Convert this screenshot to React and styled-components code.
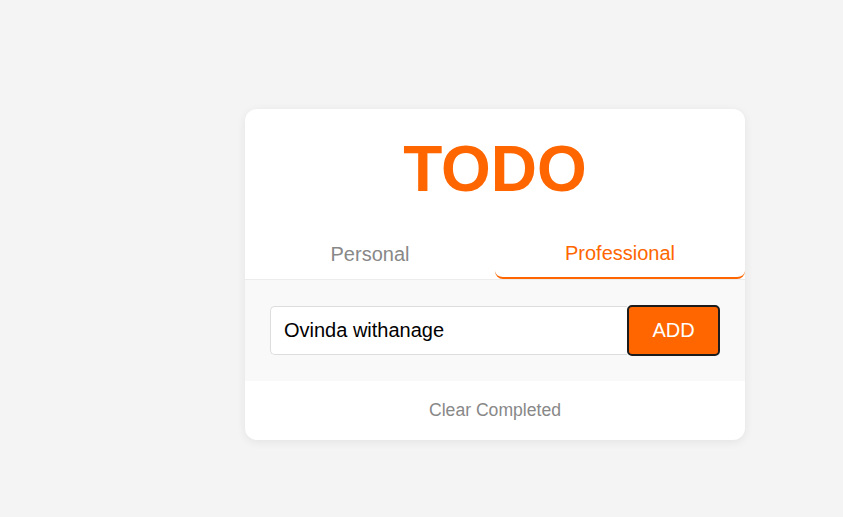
import styled, { createGlobalStyle } from "styled-components";

const GlobalStyle = createGlobalStyle`
  html, body {
    margin: 0;
    padding: 0;
    background: #f4f4f4;
    font-family: "Liberation Sans", Arial, sans-serif;
  }
`;

function App() {
  return (
    <Page>
      <GlobalStyle />
      <Card>
        <Title>TODO</Title>
        <Tabs>
          <Tab>Personal</Tab>
          <Tab active>Professional</Tab>
        </Tabs>
        <Form>
          <TaskInput defaultValue="Ovinda withanage" />
          <AddButton>ADD</AddButton>
        </Form>
        <Footer>
          <ClearButton>Clear Completed</ClearButton>
        </Footer>
      </Card>
    </Page>
  );
}

export default App;

const Page = styled.div`
  min-height: 517px;
  padding: 109px 0 0 245px;
  box-sizing: border-box;
`;

const Card = styled.div`
  width: 500px;
  background: #fff;
  border-radius: 12px;
  box-shadow: 0 2px 10px rgba(0, 0, 0, 0.07);
  overflow: hidden;
`;

const Title = styled.h1`
  margin: 0;
  padding-top: 28px;
  margin-bottom: 29px;
  text-align: center;
  font-size: 64px;
  line-height: 64px;
  font-weight: bold;
  color: #ff6600;
`;

const Tabs = styled.div`
  display: flex;
  align-items: flex-end;
`;

const Tab = styled.div`
  flex: 1;
  text-align: center;
  padding: 12px 0;
  font-size: 20px;
  line-height: 23px;
  color: ${(p) => (p.active ? "#ff6600" : "#888")};
  border-bottom: ${(p) => (p.active ? "2px solid #ff6600" : "1px solid transparent")};
  border-radius: ${(p) => (p.active ? "0 0 8px 8px" : "0")};
  cursor: pointer;
`;

const Form = styled.div`
  display: flex;
  align-items: center;
  padding: 25px;
  background: #f9f9f9;
  border-top: 1px solid #ececec;
`;

const TaskInput = styled.input`
  flex: 1;
  height: 49px;
  box-sizing: border-box;
  padding: 0 13px;
  border: 1px solid #ddd;
  border-right: none;
  border-radius: 5px 0 0 5px;
  background: #fff;
  font-family: "Liberation Sans", Arial, sans-serif;
  font-size: 20px;
  color: #000;
  outline: none;
`;

const AddButton = styled.button`
  width: 93px;
  height: 51px;
  box-sizing: border-box;
  border: 2px solid #1c1c1c;
  border-radius: 5px;
  background: #ff6600;
  color: #fff;
  font-family: "Liberation Sans", Arial, sans-serif;
  font-size: 20px;
  cursor: pointer;
`;

const Footer = styled.div`
  display: flex;
  justify-content: center;
  padding: 19px 0 20px;
`;

const ClearButton = styled.button`
  border: none;
  background: none;
  padding: 0;
  font-family: "Liberation Sans", Arial, sans-serif;
  font-size: 17.6px;
  line-height: 20px;
  color: #888;
  cursor: pointer;
`;
